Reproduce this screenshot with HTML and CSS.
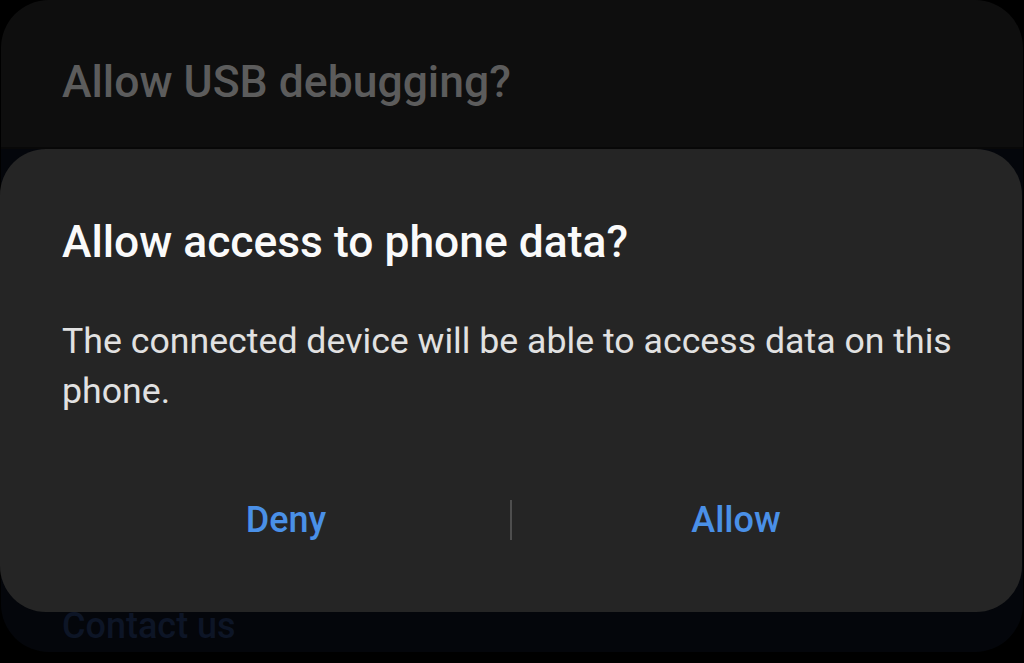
FILE: index.html
```html
<!DOCTYPE html>
<html lang="en">
<head>
<meta charset="utf-8">
<title>Allow access to phone data?</title>
<link rel="stylesheet" href="styles.css">
</head>
<body>
<div class="screen">
  <div class="back-card">
    <h2 class="back-title">Allow USB debugging?</h2>
    <div class="back-spacer"></div>
    <div class="back-link">Contact us</div>
  </div>
  <div class="dialog">
    <h1 class="dialog-title">Allow access to phone data?</h1>
    <p class="dialog-body">The connected device will be able to access data on this phone.</p>
    <div class="dialog-actions">
      <button class="action">Deny</button>
      <span class="action-divider"></span>
      <button class="action">Allow</button>
    </div>
  </div>
</div>
</body>
</html>
```

FILE: styles.css
```css
html, body {
  margin: 0;
  padding: 0;
  background: #000;
}

body {
  font-family: Roboto, "Noto Sans", "Liberation Sans", sans-serif;
  width: 1024px;
  height: 663px;
  overflow: hidden;
}

.screen {
  position: relative;
  width: 1024px;
  height: 663px;
  background: #000;
}

.back-card {
  width: 1022px;
  height: 652px;
  box-sizing: border-box;
  margin-left: 1px;
  border-radius: 48px;
  background: linear-gradient(#0e0e0e 0, #0e0e0e 147px, #080808 147px, #080808 149px, #04060b 149px, #04060b 100%);
  display: flex;
  flex-direction: column;
  padding: 56px 62px 6px 61px;
}

.back-title {
  margin: 0;
  font-size: 44.5px;
  line-height: 52px;
  font-weight: 500;
  color: #5c5c5c;
}

.back-spacer {
  flex: 1;
}

.back-link {
  font-size: 36px;
  line-height: 40px;
  font-weight: 500;
  color: #0d1526;
}

.dialog {
  position: absolute;
  left: 0;
  top: 149px;
  width: 1022px;
  height: 463px;
  box-sizing: border-box;
  background: #252525;
  border-radius: 46px;
  padding: 67px 62px 0 62px;
  display: flex;
  flex-direction: column;
}

.dialog-title {
  margin: 0;
  font-size: 44.4px;
  line-height: 52px;
  font-weight: 500;
  color: #fafafa;
}

.dialog-body {
  margin: 48px 0 0 0;
  font-size: 35.7px;
  line-height: 50px;
  font-weight: 400;
  color: #e1e1e1;
}

.dialog-actions {
  margin-top: 79px;
  display: flex;
  align-items: center;
}

.action {
  flex: 1;
  background: none;
  border: 0;
  padding: 0;
  font-family: inherit;
  font-size: 36px;
  line-height: 50px;
  font-weight: 500;
  color: #4a90e7;
}

.action-divider {
  width: 2px;
  height: 40px;
  background: #4e4e4e;
}
```
